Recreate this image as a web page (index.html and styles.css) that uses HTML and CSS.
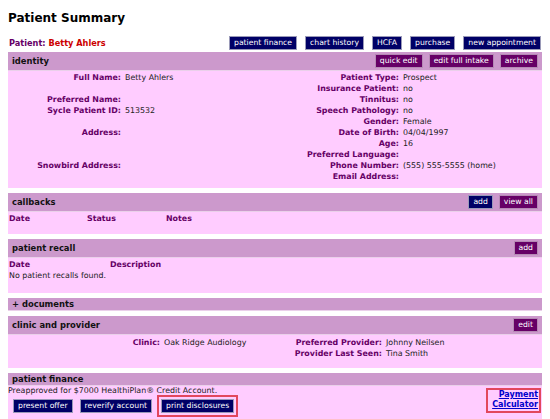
FILE: index.html
```html
<!DOCTYPE html>
<html lang="en">
<head>
    <meta charset="UTF-8">
    <title>Patient Summary</title>
    <link rel="stylesheet" href="styles.css">
</head>
<body>
    <h1 class="page-title">Patient Summary</h1>

    <div class="patient-bar">
        <div class="patient-name"><span class="lbl">Patient:</span> <span class="name">Betty Ahlers</span></div>
        <div class="btn-row top-actions">
            <button class="btn navy">patient finance</button>
            <button class="btn navy">chart history</button>
            <button class="btn navy">HCFA</button>
            <button class="btn navy">purchase</button>
            <button class="btn navy">new appointment</button>
        </div>
    </div>

    <div class="panel">
        <div class="panel-head">
            <span class="panel-title">identity</span>
            <div class="btn-row">
                <button class="btn plum">quick edit</button>
                <button class="btn plum">edit full intake</button>
                <button class="btn plum">archive</button>
            </div>
        </div>
        <div class="panel-body identity-grid">
            <div class="lbl">Full Name:</div><div class="val">Betty Ahlers</div>
            <div class="lbl">Patient Type:</div><div class="val">Prospect</div>

            <div></div><div></div>
            <div class="lbl">Insurance Patient:</div><div class="val">no</div>

            <div class="lbl">Preferred Name:</div><div class="val"></div>
            <div class="lbl">Tinnitus:</div><div class="val">no</div>

            <div class="lbl">Sycle Patient ID:</div><div class="val">513532</div>
            <div class="lbl">Speech Pathology:</div><div class="val">no</div>

            <div></div><div></div>
            <div class="lbl">Gender:</div><div class="val">Female</div>

            <div class="lbl">Address:</div><div class="val"></div>
            <div class="lbl">Date of Birth:</div><div class="val">04/04/1997</div>

            <div></div><div></div>
            <div class="lbl">Age:</div><div class="val">16</div>

            <div></div><div></div>
            <div class="lbl">Preferred Language:</div><div class="val"></div>

            <div class="lbl">Snowbird Address:</div><div class="val"></div>
            <div class="lbl">Phone Number:</div><div class="val">(555) 555-5555 (home)</div>

            <div></div><div></div>
            <div class="lbl">Email Address:</div><div class="val"></div>
        </div>
    </div>

    <div class="panel">
        <div class="panel-head">
            <span class="panel-title">callbacks</span>
            <div class="btn-row">
                <button class="btn navy">add</button>
                <button class="btn plum">view all</button>
            </div>
        </div>
        <div class="panel-body callbacks-body">
            <div class="cols callbacks-cols">
                <span class="lbl">Date</span>
                <span class="lbl">Status</span>
                <span class="lbl">Notes</span>
            </div>
        </div>
    </div>

    <div class="panel">
        <div class="panel-head">
            <span class="panel-title">patient recall</span>
            <div class="btn-row">
                <button class="btn plum">add</button>
            </div>
        </div>
        <div class="panel-body recall-body">
            <div class="cols recall-cols">
                <span class="lbl">Date</span>
                <span class="lbl">Description</span>
            </div>
            <div class="val">No patient recalls found.</div>
        </div>
    </div>

    <div class="panel">
        <div class="panel-head">
            <span class="panel-title">+ documents</span>
        </div>
    </div>

    <div class="panel">
        <div class="panel-head">
            <span class="panel-title">clinic and provider</span>
            <div class="btn-row">
                <button class="btn plum">edit</button>
            </div>
        </div>
        <div class="panel-body clinic-grid">
            <div class="lbl">Clinic:</div><div class="val">Oak Ridge Audiology</div>
            <div class="lbl">Preferred Provider:</div><div class="val">Johnny Neilsen</div>
            <div></div><div></div>
            <div class="lbl">Provider Last Seen:</div><div class="val">Tina Smith</div>
        </div>
    </div>

    <div class="panel">
        <div class="panel-head">
            <span class="panel-title">patient finance</span>
        </div>
        <div class="panel-body finance-body">
            <div class="finance-main">
                <div class="val">Preapproved for $7000 HealthiPlan® Credit Account.</div>
                <div class="finance-actions">
                    <button class="btn navy">present offer</button>
                    <button class="btn navy">reverify account</button>
                    <span class="highlight"><button class="btn navy">print disclosures</button></span>
                </div>
            </div>
            <a class="calc-link highlight" href="#">Payment<br>Calculator</a>
        </div>
    </div>
</body>
</html>
```

FILE: styles.css
```css
body {
    margin: 8px;
    font-family: "DejaVu Sans", Verdana, sans-serif;
    font-size: 7.9px;
    line-height: 11px;
    color: #222;
    background: #fff;
}

.page-title {
    margin: 3px 0 0 0;
    font-size: 12px;
    line-height: 14px;
    font-weight: bold;
    color: #000;
}

.patient-bar {
    display: flex;
    justify-content: space-between;
    align-items: center;
    margin: 11px 0 2px 0;
}

.patient-name {
    padding-left: 1px;
    font-size: 8.2px;
    font-weight: bold;
}

.patient-name .lbl {
    color: #660066;
}

.patient-name .name {
    color: #cc0000;
}

.btn-row {
    display: flex;
    gap: 6px;
}

.top-actions {
    gap: 8px;
    padding-right: 1px;
}

.btn {
    font-family: inherit;
    font-size: 7.7px;
    line-height: 12px;
    height: 14px;
    padding: 0 4px;
    margin: 0;
    color: #fff;
    border: 1px solid #9a9ab8;
    cursor: pointer;
    white-space: nowrap;
}

.btn.navy {
    background: #000066;
}

.btn.plum {
    background: #660066;
    border-color: #b58ab5;
}

.panel {
    margin-bottom: 5px;
    background: #ffccff;
}

.panel-head {
    display: flex;
    justify-content: space-between;
    align-items: center;
    padding: 1px 4px;
    background: #cc99cc;
    border-bottom: 1px solid #ead0ea;
}

.panel-head .btn-row {
    margin: 1px 0;
}

.panel-title {
    font-size: 8.4px;
    line-height: 10px;
    font-weight: bold;
    color: #111;
}

.lbl {
    font-weight: bold;
    color: #660066;
}

.val {
    color: #222;
}

.panel-body {
    padding: 1px 0 6px 0;
}

.identity-grid {
    display: grid;
    grid-template-columns: 113px 170px 100px 1fr;
    column-gap: 4px;
    grid-auto-rows: 11px;
}

.identity-grid .lbl,
.clinic-grid .lbl {
    text-align: right;
    white-space: nowrap;
}

.cols {
    display: grid;
    padding-left: 1px;
}

.callbacks-body {
    padding-bottom: 10px;
}

.callbacks-cols {
    grid-template-columns: 78px 79px 1fr;
}

.recall-body {
    padding: 1px 0 12px 1px;
}

.recall-cols {
    padding-left: 0;
    grid-template-columns: 101px 1fr;
}

.clinic-grid {
    display: grid;
    grid-template-columns: 152px 110px 104px 1fr;
    column-gap: 4px;
    grid-auto-rows: 11px;
    padding: 2px 0 9px 0;
}

.finance-body {
    display: flex;
    justify-content: space-between;
    align-items: flex-start;
    padding: 0 1px 4px 0;
}

.finance-main .val {
    line-height: 9px;
}

.finance-actions {
    display: flex;
    align-items: center;
    gap: 7px;
    padding-left: 5px;
}

.highlight {
    border: 2px solid #e2475d;
}

.finance-actions .highlight {
    padding: 2px 2px;
    margin-left: -2px;
}

.finance-actions .highlight .btn {
    display: block;
}

.calc-link {
    margin-top: 2px;
    padding: 0 1px 1px 4px;
    font-size: 8px;
    line-height: 10px;
    font-weight: bold;
    color: #0000cc;
    text-align: right;
}
```
